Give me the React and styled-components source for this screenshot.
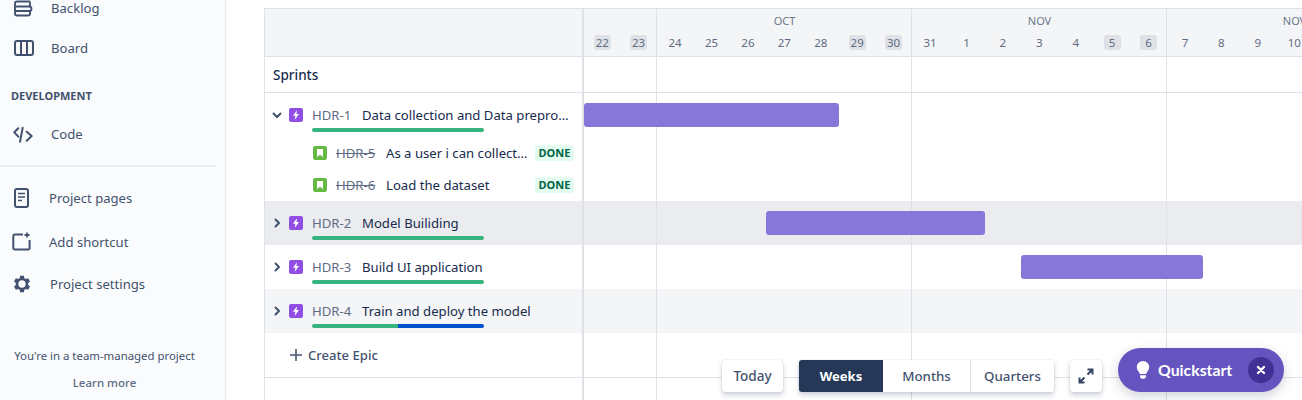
import React from "react"
import styled, { createGlobalStyle } from "styled-components"

const GlobalStyle = createGlobalStyle`
  * { box-sizing: border-box; }
  html, body { margin: 0; height: 100%; overflow: hidden; background: #fff; }
  body {
    font-family: "Noto Sans", "Liberation Sans", sans-serif;
    font-size: 14px;
    color: #172b4d;
  }
`

const Page = styled.div`
  position: relative;
  display: flex;
  width: 1302px;
  height: 400px;
  overflow: hidden;
`

// sidebar
const Sidebar = styled.aside`
  flex: 0 0 226px;
  height: 400px;
  background: #fafbfc;
  border-right: 1px solid #ebecf0;
  display: flex;
  flex-direction: column;
  overflow: hidden;
`
const NavList = styled.div`
  margin-top: -12px;
  display: flex;
  flex-direction: column;
`
const NavItem = styled.div`
  display: flex;
  align-items: center;
  height: ${(p) => p.$height || 40}px;
  padding-left: 12px;
  color: #42526e;
  font-size: 13.1px;
  svg { flex: 0 0 auto; color: #42526e; }
  span { margin-left: ${(p) => p.$textGap || 15}px; }
`
const NavHeading = styled.div`
  height: 46px;
  padding: 20px 0 0 11px;
  font-size: 11px;
  line-height: 16px;
  font-weight: 700;
  color: #42526e;
`
const NavDivider = styled.div`
  width: 216px;
  height: 2px;
  margin: 11px 0 9px;
  background: #ebecf0;
`
const SidebarNote = styled.div`
  margin-top: 42px;
  width: 209px;
  text-align: center;
  font-size: 11.4px;
  line-height: 20px;
  color: #42526e;
`
const LearnMore = styled.div`
  margin-top: 7px;
  font-size: 11.5px;
  font-weight: 500;
  color: #5e6c84;
`

// roadmap table
const Main = styled.main`
  flex: 1;
  min-width: 0;
  padding: 8px 0 0 38px;
  display: flex;
`
const Panel = styled.div`
  flex: 1;
  min-width: 0;
  display: flex;
  flex-direction: column;
  border-top: 1px solid #dfe1e6;
  border-left: 1px solid #dfe1e6;
`
const Row = styled.div`
  display: grid;
  grid-template-columns: 319px 1fr;
  flex: ${(p) => (p.$fill ? 1 : "0 0 auto")};
  height: ${(p) => (p.$fill ? "auto" : `${p.$height}px`)};
  background-color: ${(p) => p.$bg || "transparent"};
  border-bottom: ${(p) => (p.$line ? "1px solid #dfe1e6" : "0")};
`
const LeftCell = styled.div`
  min-width: 0;
  border-right: 2px solid #dfe1e6;
`
const Timeline = styled.div`
  position: relative;
  min-width: 0;
  overflow: hidden;
  background-image: linear-gradient(
    to right,
    transparent 72px,
    #dfe1e6 72px,
    #dfe1e6 73px,
    transparent 73px
  );
  background-size: 255px 100%;
  background-repeat: repeat-x;
`
const HeaderLeft = styled(LeftCell)`
  background: #f4f5f7;
`
const HeaderTimeline = styled(Timeline)`
  background-color: #f4f5f7;
  display: flex;
  flex-direction: column;
`
const MonthRow = styled.div`
  display: flex;
  height: 25px;
`
const Month = styled.div`
  flex: 0 0 ${(p) => p.$width}px;
  padding: 4px 0 0 2px;
  text-align: center;
  font-size: 11px;
  line-height: 16px;
  color: #6b778c;
`
const DayRow = styled.div`
  display: grid;
  grid-template-columns: repeat(20, 36.43px);
`
const Day = styled.div`
  display: flex;
  justify-content: center;
  font-size: 11.5px;
  line-height: 15px;
  margin-top: 1px;
  color: #5e6c84;
  span {
    min-width: 17px;
    height: 15px;
    text-align: center;
    border-radius: 3px;
    background: ${(p) => (p.$weekend ? "#dfe1e6" : "transparent")};
  }
`
const SprintLabel = styled.div`
  padding: 8px 0 0 8px;
  font-size: 13.5px;
  line-height: 20px;
  font-weight: 500;
`
const EpicCell = styled(LeftCell)`
  display: flex;
  align-items: flex-start;
  padding: 12px 0 0 3px;
`
const Toggle = styled.div`
  flex: 0 0 17px;
  height: 20px;
  margin-right: 4px;
  display: flex;
  align-items: center;
  justify-content: center;
  color: #42526e;
`
const IssueIcon = styled.div`
  flex: 0 0 14px;
  width: 14px;
  height: 14px;
  margin-top: 3px;
  border-radius: 2px;
  background: ${(p) => p.$color};
  display: flex;
  align-items: center;
  justify-content: center;
`
const EpicBody = styled.div`
  flex: 0 0 258px;
  width: 258px;
  margin-left: 9px;
`
const TitleLine = styled.div`
  display: flex;
  height: 20px;
  line-height: 20px;
  font-size: 13.15px;
`
const IssueKey = styled.span`
  flex: 0 0 50px;
  color: #5e6c84;
  text-decoration: ${(p) => (p.$done ? "line-through" : "none")};
`
const IssueTitle = styled.span`
  flex: 1;
  min-width: 0;
  white-space: nowrap;
  overflow: hidden;
  text-overflow: ellipsis;
  color: #172b4d;
`
const Progress = styled.div`
  display: flex;
  width: 172px;
  height: 4px;
  margin-top: 3px;
  border-radius: 2px;
  overflow: hidden;
`
const ProgressPart = styled.div`
  flex: ${(p) => p.$share};
  background: ${(p) => p.$color};
`
const ChildCell = styled(LeftCell)`
  display: flex;
  align-items: center;
  padding-left: 48px;
  ${IssueIcon} { margin-top: 0; }
`
const ChildBody = styled(TitleLine)`
  flex: 0 0 192px;
  width: 192px;
  margin-left: 9px;
`
const Lozenge = styled.span`
  margin-left: 7px;
  width: 39px;
  height: 16px;
  border-radius: 3px;
  background: #e3fcef;
  color: #006644;
  font-size: 11px;
  line-height: 16px;
  font-weight: 700;
  text-align: center;
`
const CreateCell = styled(LeftCell)`
  display: flex;
  align-items: center;
  padding-left: 24px;
  gap: 5px;
  font-size: 13.1px;
  font-weight: 500;
  color: #42526e;
`
const Bar = styled.div`
  height: 24px;
  margin-top: 10px;
  border-radius: 3px;
  background: #8777d9;
`

// floating controls
const Toolbar = styled.div`
  position: absolute;
  left: 722px;
  bottom: 8px;
  display: flex;
  align-items: flex-end;
  gap: 16px;
`
const ToolButton = styled.div`
  width: ${(p) => p.$width}px;
  height: 32px;
  display: flex;
  align-items: center;
  justify-content: center;
  background: #fff;
  border-radius: 3px;
  box-shadow: 0 3px 5px rgba(9, 30, 66, 0.2), 0 0 1px rgba(9, 30, 66, 0.31);
  font-size: 13.5px;
  font-weight: 500;
  color: #42526e;
`
const Segments = styled.div`
  display: flex;
  height: 32px;
  border-radius: 3px;
  overflow: hidden;
  box-shadow: 0 3px 5px rgba(9, 30, 66, 0.2), 0 0 1px rgba(9, 30, 66, 0.31);
`
const Segment = styled.div`
  width: ${(p) => p.$width}px;
  display: flex;
  align-items: center;
  justify-content: center;
  background: ${(p) => (p.$active ? "#253858" : "#fff")};
  color: ${(p) => (p.$active ? "#fff" : "#42526e")};
  border-left: ${(p) => (p.$split ? "1px solid #dfe1e6" : "0")};
  font-size: ${(p) => (p.$active ? 13 : 13.3)}px;
  font-weight: ${(p) => (p.$active ? 700 : 500)};
`
const Quickstart = styled.div`
  width: 166px;
  height: 44px;
  padding: 0 10px 0 17px;
  display: flex;
  align-items: center;
  border-radius: 22px;
  background: #6554c0;
  color: #fff;
  font-family: Lato, sans-serif;
  font-size: 15.8px;
  font-weight: 700;
  box-shadow: 0 4px 12px rgba(9, 30, 66, 0.2);
`
const QuickLabel = styled.span`
  flex: 1;
  margin: -1px 0 0 7px;
`
const QuickClose = styled.div`
  width: 26px;
  height: 26px;
  border-radius: 50%;
  background: #403294;
  display: flex;
  align-items: center;
  justify-content: center;
`

const BacklogIcon = () => (
  <svg width="24" height="24" viewBox="0 0 24 24" fill="none" stroke="currentColor" strokeWidth="1.9">
    <path d="M18 5.5H5a2 2 0 0 0-2 2v10a2 2 0 0 0 2 2h11a2 2 0 0 0 2-2V15M18 5.5v5" />
    <path d="M3 10.5h14.2a2.2 2.2 0 0 1 0 4.5H3" />
  </svg>
)
const BoardIcon = () => (
  <svg width="24" height="24" viewBox="0 0 24 24" fill="none" stroke="currentColor" strokeWidth="2">
    <rect x="3" y="5" width="18" height="14" rx="2" />
    <path d="M9 5v14M15 5v14" />
  </svg>
)
const CodeIcon = () => (
  <svg width="24" height="24" viewBox="0 0 24 24" fill="none" stroke="currentColor" strokeWidth="2" strokeLinecap="round" strokeLinejoin="round">
    <path d="M6.3 6.3l-4 4 4 4.4M14.7 9.7l5 4.3-5 4.7M10.7 5.7L8 19.7" />
  </svg>
)
const PageIcon = () => (
  <svg width="20" height="24" viewBox="0 0 20 24" fill="none">
    <rect x="3" y="3" width="13" height="18" rx="2" stroke="currentColor" strokeWidth="2" />
    <path d="M6 7.5h7M6 11h7M6 14.5h4" stroke="currentColor" strokeWidth="1.6" />
  </svg>
)
const ShortcutIcon = () => (
  <svg width="22" height="24" viewBox="0 0 22 24" fill="none" stroke="currentColor" strokeWidth="2">
    <path d="M11 4.5H2.800a1.500 1.500 0 0 0-1.500 1.500v12.100a1.500 1.500 0 0 0 1.500 1.500h13.300a1.500 1.500 0 0 0 1.500-1.500V10" />
    <path d="M15 2.600v5M12.500 5h5" strokeWidth="1.800" />
  </svg>
)
const GearIcon = () => (
  <svg width="20" height="24" viewBox="1 0 22 24" fill="none">
    <path
      fillRule="evenodd"
      fill="currentColor"
      d="M10 3h4l.6 2.600 1.600.9 2.600-.8 2 3.500-2 1.800v2l2 1.800-2 3.500-2.600-.8-1.600.9L14 21h-4l-.6-2.600-1.600-.9-2.600.8-2-3.500 2-1.800v-2l-2-1.800 2-3.500 2.600.8 1.600-.9L10 3zm2 5a4 4 0 1 0 0 8 4 4 0 0 0 0-8z"
    />
  </svg>
)
const Chevron = ({ open }) => (
  <svg width="12" height="12" viewBox="0 0 12 12" fill="none" stroke="currentColor" strokeWidth="2" strokeLinecap="round" strokeLinejoin="round">
    {open ? <path d="M2.500 4.500L6 8l3.500-3.500" /> : <path d="M4.500 2.500L8 6l-3.500 3.500" />}
  </svg>
)
const BoltGlyph = () => (
  <svg width="12" height="12" viewBox="0 0 10 10">
    <path d="M5.800 1L2.500 5.600h2L4 9l3.500-4.800H5.400z" fill="#fff" />
  </svg>
)
const BookmarkGlyph = () => (
  <svg width="10" height="10" viewBox="0 0 10 10">
    <path d="M2 1h6v8L5 6.800 2 9z" fill="#fff" />
  </svg>
)
const PlusIcon = () => (
  <svg width="14" height="14" viewBox="0 0 14 14" stroke="#42526e" strokeWidth="1.500">
    <path d="M7 1v12M1 7h12" />
  </svg>
)
const ExpandIcon = () => (
  <svg width="18" height="18" viewBox="0 0 18 18" fill="none" stroke="#344563" strokeWidth="2">
    <path d="M10.500 7.500L15 3M10.500 2.500h5v5M7.500 10.500L3 15M2.500 10.500v5h5" />
  </svg>
)
const BulbIcon = () => (
  <svg width="16" height="20" viewBox="0 0 16 20" fill="#fff">
    <path d="M8 1a6.200 6.200 0 0 0-6.200 6.200c0 2.300 1.300 3.600 2.200 4.900.5.700.7 1.300.8 1.900h6.400c.1-.6.3-1.200.8-1.900.9-1.300 2.200-2.600 2.200-4.900A6.200 6.200 0 0 0 8 1z" />
    <path d="M5 15.200h6v1.300a2.500 2.500 0 0 1-2 2.300H7a2.500 2.500 0 0 1-2-2.300z" />
  </svg>
)
const CloseIcon = () => (
  <svg width="10" height="10" viewBox="0 0 10 10" stroke="#fff" strokeWidth="2.400" strokeLinecap="round">
    <path d="M2 2l6 6M8 2l-6 6" />
  </svg>
)

const days = [22, 23, 24, 25, 26, 27, 28, 29, 30, 31, 1, 2, 3, 4, 5, 6, 7, 8, 9, 10]
const weekends = [0, 1, 7, 8, 14, 15]

const EpicRow = ({ id, title, open, bg, bar, parts }) => (
  <Row $height={44} $bg={bg}>
    <EpicCell>
      <Toggle><Chevron open={open} /></Toggle>
      <IssueIcon $color="#904ee2"><BoltGlyph /></IssueIcon>
      <EpicBody>
        <TitleLine>
          <IssueKey>{id}</IssueKey>
          <IssueTitle>{title}</IssueTitle>
        </TitleLine>
        <Progress>
          {parts.map((part) => (
            <ProgressPart key={part.color} $share={part.share} $color={part.color} />
          ))}
        </Progress>
      </EpicBody>
    </EpicCell>
    <Timeline>
      {bar && <Bar style={{ marginLeft: bar.left, width: bar.width }} />}
    </Timeline>
  </Row>
)

const ChildRow = ({ id, title }) => (
  <Row $height={32}>
    <ChildCell>
      <IssueIcon $color="#65ba43"><BookmarkGlyph /></IssueIcon>
      <ChildBody>
        <IssueKey $done>{id}</IssueKey>
        <IssueTitle>{title}</IssueTitle>
      </ChildBody>
      <Lozenge>DONE</Lozenge>
    </ChildCell>
    <Timeline />
  </Row>
)

const allGreen = [{ color: "#36b37e", share: 1 }]

export default function App() {
  return (
    <Page>
      <GlobalStyle />
      <Sidebar>
        <NavList>
          <NavItem><BacklogIcon /><span>Backlog</span></NavItem>
          <NavItem><BoardIcon /><span>Board</span></NavItem>
          <NavHeading>DEVELOPMENT</NavHeading>
          <NavItem><CodeIcon /><span>Code</span></NavItem>
          <NavDivider />
          <NavItem $height={44} $textGap={17}><PageIcon /><span>Project pages</span></NavItem>
          <NavItem $height={44} $textGap={15}><ShortcutIcon /><span>Add shortcut</span></NavItem>
          <NavItem $textGap={18}><GearIcon /><span>Project settings</span></NavItem>
        </NavList>
        <SidebarNote>
          You're in a team-managed project
          <LearnMore>Learn more</LearnMore>
        </SidebarNote>
      </Sidebar>
      <Main>
        <Panel>
          <Row $height={48} $line>
            <HeaderLeft />
            <HeaderTimeline>
              <MonthRow>
                <Month $width={72} />
                <Month $width={255}>OCT</Month>
                <Month $width={255}>NOV</Month>
                <Month $width={255}>NOV</Month>
              </MonthRow>
              <DayRow>
                {days.map((day, i) => (
                  <Day key={i} $weekend={weekends.includes(i)}><span>{day}</span></Day>
                ))}
              </DayRow>
            </HeaderTimeline>
          </Row>
          <Row $height={36} $line>
            <LeftCell><SprintLabel>Sprints</SprintLabel></LeftCell>
            <Timeline />
          </Row>
          <EpicRow id="HDR-1" title="Data collection and Data preprocessing" open bar={{ left: 0, width: 255 }} parts={allGreen} />
          <ChildRow id="HDR-5" title="As a user i can collect the data" />
          <ChildRow id="HDR-6" title="Load the dataset" />
          <EpicRow id="HDR-2" title="Model Builiding" bg="#ebecf0" bar={{ left: 182, width: 219 }} parts={allGreen} />
          <EpicRow id="HDR-3" title="Build UI application" bar={{ left: 437, width: 182 }} parts={allGreen} />
          <EpicRow id="HDR-4" title="Train and deploy the model" bg="#f4f5f7" parts={[{ color: "#36b37e", share: 1 }, { color: "#0052cc", share: 1 }]} />
          <Row $height={45} $line>
            <CreateCell><PlusIcon />Create Epic</CreateCell>
            <Timeline />
          </Row>
          <Row $fill>
            <LeftCell />
            <Timeline />
          </Row>
        </Panel>
      </Main>
      <Toolbar>
        <ToolButton $width={61}>Today</ToolButton>
        <Segments>
          <Segment $width={84} $active>Weeks</Segment>
          <Segment $width={87}>Months</Segment>
          <Segment $width={84} $split>Quarters</Segment>
        </Segments>
        <ToolButton $width={32}><ExpandIcon /></ToolButton>
        <Quickstart>
          <BulbIcon />
          <QuickLabel>Quickstart</QuickLabel>
          <QuickClose><CloseIcon /></QuickClose>
        </Quickstart>
      </Toolbar>
    </Page>
  )
}
